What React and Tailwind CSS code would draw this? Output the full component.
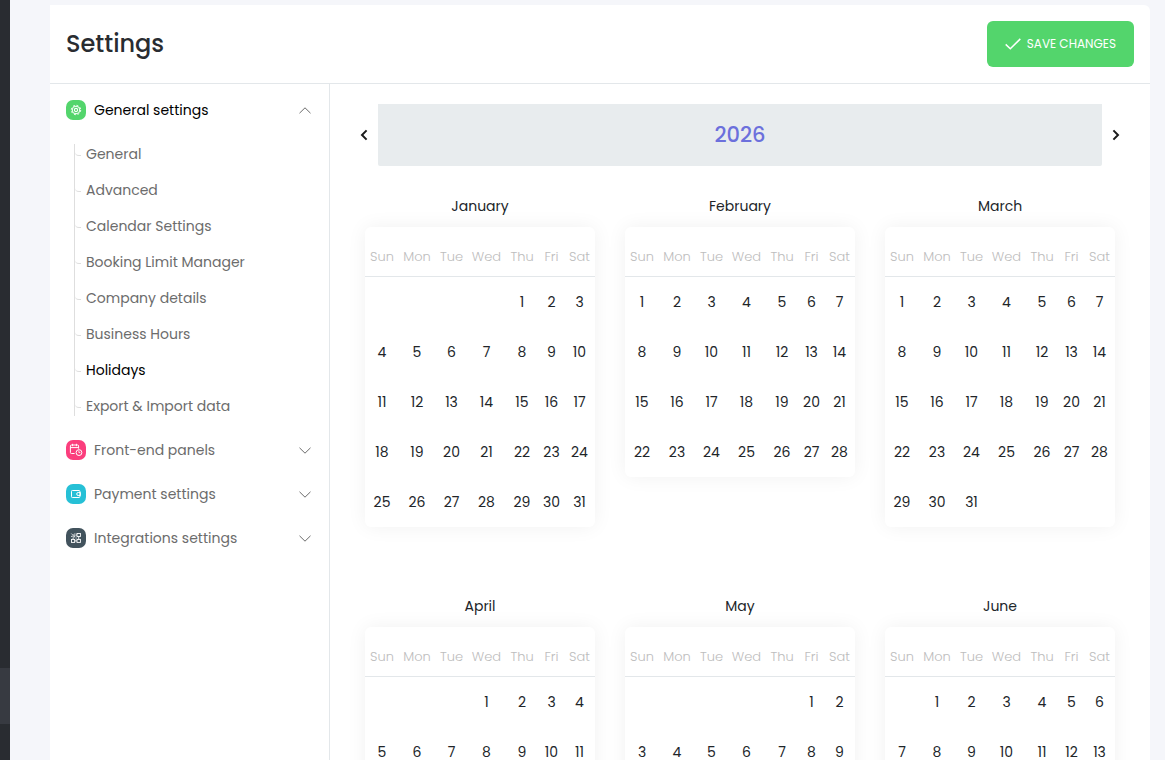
import { useState } from "react";

const YEAR = 2026;
const WEEKDAYS = ["Sun", "Mon", "Tue", "Wed", "Thu", "Fri", "Sat"];
const MONTHS = ["January", "February", "March", "April", "May", "June"];

const GearIcon = () => (
  <svg viewBox="0 0 20 20" className="w-5 h-5" fill="none" stroke="currentColor">
    <circle cx="10" cy="10" r="3.8" strokeWidth="1" />
    <circle cx="10" cy="10" r="4.7" strokeWidth="1" strokeDasharray="1.85 1.84" />
    <circle cx="10" cy="10" r="1.6" strokeWidth="1.1" />
  </svg>
);

const CalendarClockIcon = () => (
  <svg viewBox="0 0 20 20" className="w-5 h-5" fill="none" stroke="currentColor">
    <path d="M8.6 13.5H5.4a1 1 0 0 1-1-1V6a1 1 0 0 1 1-1h6.2a1 1 0 0 1 1 1v2.6M4.4 7.6h8.2M6.6 3.8v2.4M10.4 3.8v2.4" />
    <circle cx="13" cy="12.6" r="2.9" />
    <path d="M12.9 10.8v1.8h1.5" strokeWidth="0.8" />
  </svg>
);

const WalletIcon = () => (
  <svg viewBox="0 0 20 20" className="w-5 h-5" fill="none" stroke="currentColor">
    <rect x="5.5" y="6.5" width="8.4" height="7" rx="0.8" />
    <path d="M14.4 8.5h-2.2a1.5 1.5 0 0 0 0 3h2.2z" />
  </svg>
);

const BlocksIcon = () => (
  <svg viewBox="0 0 20 20" className="w-5 h-5" fill="none" stroke="currentColor" strokeWidth="0.9">
    <path d="M5.4 5.6l1.2 1.2M9 5.4L6.2 8.6M8.7 7.2v1.7H7M5.2 8.4h1" />
    <rect x="11" y="5.5" width="3.4" height="3" />
    <rect x="5.5" y="11.4" width="3.2" height="3" />
    <rect x="11" y="11.4" width="3.4" height="3" />
    <path d="M8.7 12.9H11M12.7 8.5v2.9M7.1 9.6v1.8M9.4 7H11M9.6 10h1" />
  </svg>
);

const Chevron = ({ open }) => (
  <svg viewBox="0 0 12 7" className="w-3 h-[7px]" fill="none" stroke="#6b6b6b">
    <path d={open ? "M.5 6.2L6 .8l5.5 5.4" : "M.5 .8L6 6.2 11.5 .8"} />
  </svg>
);

const GROUPS = [
  {
    title: "General settings",
    icon: GearIcon,
    color: "bg-[#53d56c]",
    items: [
      "General",
      "Advanced",
      "Calendar Settings",
      "Booking Limit Manager",
      "Company details",
      "Business Hours",
      "Holidays",
      "Export & Import data",
    ],
  },
  { title: "Front-end panels", icon: CalendarClockIcon, color: "bg-[#fb3e7d]", items: [] },
  { title: "Payment settings", icon: WalletIcon, color: "bg-[#26c0d6]", items: [] },
  { title: "Integrations settings", icon: BlocksIcon, color: "bg-[#42535d]", items: [] },
];

function getWeeks(year, month) {
  const offset = new Date(year, month, 1).getDay();
  const count = new Date(year, month + 1, 0).getDate();
  const rows = Math.ceil((offset + count) / 7);
  return Array.from({ length: rows }, (_, r) =>
    WEEKDAYS.map((_, c) => {
      const day = r * 7 + c - offset + 1;
      return day > 0 && day <= count ? day : null;
    })
  );
}

const Month = ({ name, year, index }) => (
  <section className="min-h-[400px]">
    <h3 className="mb-2.5 text-center text-sm leading-[21px] text-[#212529]">{name}</h3>
    <div className="rounded-md bg-white shadow-[0_0_20px_rgba(0,0,0,0.06)]">
      <table
        className="w-full table-fixed border-separate border-spacing-0 text-center"
        aria-label={name}
      >
        <colgroup>
          <col className="w-[34px]" />
          <col className="w-[36px]" />
          <col className="w-[33px]" />
          <col className="w-[37px]" />
          <col className="w-[34px]" />
          <col className="w-[25px]" />
          <col className="w-[31px]" />
        </colgroup>
        <thead>
          <tr className="h-[50px]">
            {WEEKDAYS.map((d) => (
              <th
                key={d}
                className="border-b border-[#e3e7ea] pt-2.5 text-[13px] font-light text-[#bdbdbd]"
              >
                {d}
              </th>
            ))}
          </tr>
        </thead>
        <tbody>
          {getWeeks(year, index).map((week, i) => (
            <tr key={i} className="h-[50px]">
              {week.map((day, j) => (
                <td key={j} className="text-sm text-[#212529]">
                  {day}
                </td>
              ))}
            </tr>
          ))}
        </tbody>
      </table>
    </div>
  </section>
);

const NavGroup = ({ group, open, onToggle, active, onSelect }) => {
  const Icon = group.icon;
  return (
    <div>
      <button
        type="button"
        onClick={onToggle}
        aria-expanded={open}
        className={`flex h-11 w-full items-center gap-2 pl-4 pr-[18px] text-sm ${
          open ? "text-black" : "text-[#6c6c6c]"
        }`}
      >
        <span className={`rounded-[7px] text-white ${group.color}`}>
          <Icon />
        </span>
        <span className="flex-1 text-left">{group.title}</span>
        <Chevron open={open} />
      </button>
      {open && group.items.length > 0 && (
        <div className="my-1 ml-6 py-2">
          <ul className="border-l border-[#dedede]">
            {group.items.map((item, i) => (
              <li
                key={item}
                className={`flex items-center ${
                  i === 0 ? "h-7 pb-2" : i === group.items.length - 1 ? "h-7 pt-2" : "h-9"
                }`}
              >
                <span className="h-1 w-1.5 rounded-bl-sm border-b border-[#dedede]" />
                <a
                  href="#"
                  onClick={() => onSelect(item)}
                  className={`ml-[5px] text-sm ${item === active ? "text-black" : "text-[#6c6c6c]"}`}
                >
                  {item}
                </a>
              </li>
            ))}
          </ul>
        </div>
      )}
    </div>
  );
};

export default function App() {
  const [year, setYear] = useState(YEAR);
  const [openGroup, setOpenGroup] = useState("General settings");
  const [active, setActive] = useState("Holidays");

  return (
    <div className="flex min-h-screen bg-[#f5f6fa] font-[Poppins,Inter,sans-serif] antialiased">
      <aside className="w-2.5 shrink-0 bg-[#292c31]">
        <div className="sticky top-0 flex h-screen flex-col justify-end pb-9">
          <div className="h-14 bg-[#373a41]" />
        </div>
      </aside>

      <main className="ml-10 mr-[15px] mt-[5px] flex min-w-0 flex-1 flex-col rounded-tr-md bg-white">
        <header className="flex items-center justify-between border-b border-[#e3e7ea] px-4 py-4">
          <h1 className="text-2xl font-medium text-[#292c31]">Settings</h1>
          <button
            type="button"
            className="flex h-[46px] items-center gap-1.5 rounded-md bg-[#53d56c] px-[18px] text-xs text-white"
          >
            <svg viewBox="0 0 16 12" className="h-3 w-4" fill="none" stroke="currentColor" strokeWidth="1.5">
              <path d="M.7 6.4l4.6 4.4L15.3 .9" />
            </svg>
            SAVE CHANGES
          </button>
        </header>

        <div className="flex flex-1">
          <nav className="w-[280px] shrink-0 border-r border-[#e3e7ea] pt-1">
            {GROUPS.map((group) => (
              <NavGroup
                key={group.title}
                group={group}
                open={openGroup === group.title}
                onToggle={() => setOpenGroup(openGroup === group.title ? null : group.title)}
                active={active}
                onSelect={setActive}
              />
            ))}
          </nav>

          <div className="min-w-0 flex-1 px-5 pt-5">
            <div className="flex items-center">
              <button
                type="button"
                aria-label="Previous year"
                onClick={() => setYear(year - 1)}
                className="flex h-11 w-7 items-center justify-center text-[#1b1b1b]"
              >
                <svg viewBox="0 0 8 12" className="h-3 w-2" fill="none" stroke="currentColor" strokeWidth="2">
                  <path d="M6.6 1.4L2 6l4.6 4.6" />
                </svg>
              </button>
              <div className="flex h-[62px] flex-1 items-center justify-center rounded-b-xs bg-[#e8ecee]">
                <h2 className="text-[21px] font-medium text-[#6c70dc]">{year}</h2>
              </div>
              <button
                type="button"
                aria-label="Next year"
                onClick={() => setYear(year + 1)}
                className="flex h-11 w-7 items-center justify-center text-[#1b1b1b]"
              >
                <svg viewBox="0 0 8 12" className="h-3 w-2" fill="none" stroke="currentColor" strokeWidth="2">
                  <path d="M1.4 1.4L6 6l-4.6 4.6" />
                </svg>
              </button>
            </div>

            <div className="mt-[30px] grid grid-cols-3 gap-x-[30px] px-[15px]">
              {MONTHS.map((name, i) => (
                <Month key={name} name={name} year={year} index={i} />
              ))}
            </div>
          </div>
        </div>
      </main>
    </div>
  );
}
